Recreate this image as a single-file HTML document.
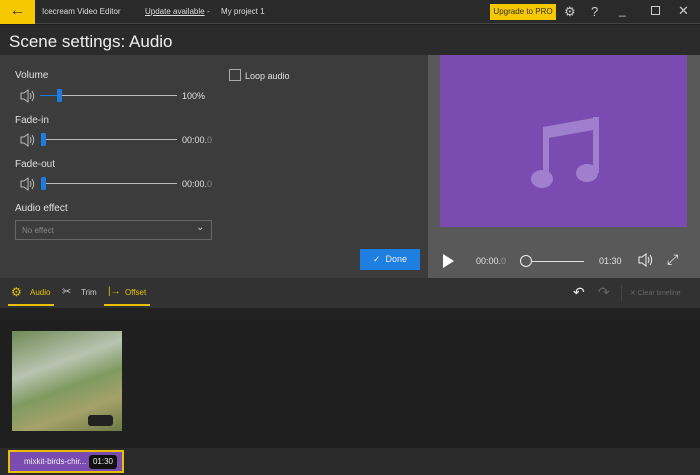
<!DOCTYPE html><html><head><style>
*{margin:0;padding:0;box-sizing:border-box}
body{width:700px;height:475px;overflow:hidden;background:#1f1f1f;font-family:"Liberation Sans",sans-serif;color:#ddd;position:relative}
.a{position:absolute}
.t{font-size:10px;color:#e0e0e0}
.sl{height:1px;background:#bbb}
.kn{width:5px;height:13px;background:#1e7be0;border-radius:1px}
</style></head><body>
<div class="a" style="left:0;top:0;width:700px;height:24px;background:#2a2a2a;border-bottom:1px solid #444"></div>
<div class="a" style="left:0;top:0;width:35px;height:24px;background:#f5c800;color:#333;font-size:16px;text-align:center;line-height:22px">&#8592;</div>
<div class="a" style="left:42px;top:7px;font-size:8px;color:#ddd">Icecream Video Editor</div>
<div class="a" style="left:145px;top:7px;font-size:8px;color:#ddd;text-decoration:underline">Update available</div>
<div class="a" style="left:207px;top:7px;font-size:8px;color:#ddd">-</div>
<div class="a" style="left:221px;top:7px;font-size:8px;color:#ddd">My project 1</div>
<div class="a" style="left:490px;top:4px;width:66px;height:16px;background:#f5c800;color:#333;font-size:8px;text-align:center;line-height:16px">Upgrade to PRO</div>
<div class="a" style="left:564px;top:4px;font-size:13px;color:#ccc">&#9881;</div>
<div class="a" style="left:591px;top:4px;font-size:13px;color:#ccc">?</div>
<div class="a" style="left:619px;top:3px;font-size:12px;color:#ccc">_</div>
<div class="a" style="left:651px;top:6px;width:9px;height:9px;border:1px solid #ccc"></div>
<div class="a" style="left:678px;top:3px;font-size:13px;color:#ccc">&#10005;</div>
<div class="a" style="left:0;top:25px;width:700px;height:30px;background:#2b2b2b"></div>
<div class="a" style="left:9px;top:32px;font-size:17px;color:#eee">Scene settings: Audio</div>
<div class="a" style="left:0;top:55px;width:428px;height:223px;background:#3c3c3c"></div>
<div class="a" style="left:428px;top:55px;width:272px;height:223px;background:#595959"></div>
<div class="a" style="left:440px;top:55px;width:247px;height:172px;background:#7a4cb2"></div>
<svg class="a" style="left:525px;top:115px" width="80" height="80" viewBox="0 0 80 80"><path d="M18 12 L74 2 L74 14 L18 24Z" fill="#a07fcf"/><rect x="18" y="12" width="6" height="58" fill="#a07fcf"/><rect x="68" y="2" width="6" height="56" fill="#a07fcf"/><ellipse cx="17" cy="64" rx="11" ry="9" fill="#a07fcf"/><ellipse cx="62" cy="58" rx="11" ry="9" fill="#a07fcf"/></svg>
<svg width="0" height="0" style="position:absolute"><defs><g id="spk"><path d="M1 5h3l4-3v12l-4-3H1z" fill="none" stroke="#bbb" stroke-width="1"/><path d="M10 5q2 3 0 6M12 3q3.5 5 0 10" fill="none" stroke="#bbb" stroke-width="1"/></g></defs></svg>
<div class="a t" style="left:15px;top:70px">Volume</div>
<div class="a" style="left:229px;top:69px;width:12px;height:12px;border:1px solid #aaa"></div>
<div class="a t" style="left:245px;top:71px;font-size:9px">Loop audio</div>
<svg class="a" style="left:20px;top:88px" width="16" height="16"><use href="#spk"/></svg>
<div class="a sl" style="left:40px;top:95px;width:137px"></div><div class="a" style="left:40px;top:95px;width:18px;height:1px;background:#1e7be0"></div><div class="a kn" style="left:57px;top:89px"></div>
<div class="a t" style="left:182px;top:91px;font-size:9px">100%</div>
<div class="a t" style="left:15px;top:115px">Fade-in</div>
<svg class="a" style="left:20px;top:132px" width="16" height="16"><use href="#spk"/></svg>
<div class="a sl" style="left:42px;top:139px;width:135px"></div><div class="a kn" style="left:41px;top:133px"></div>
<div class="a t" style="left:182px;top:135px;font-size:9px">00:00.<span style="color:#888">0</span></div>
<div class="a t" style="left:15px;top:159px">Fade-out</div>
<svg class="a" style="left:20px;top:176px" width="16" height="16"><use href="#spk"/></svg>
<div class="a sl" style="left:42px;top:183px;width:135px"></div><div class="a kn" style="left:41px;top:177px"></div>
<div class="a t" style="left:182px;top:179px;font-size:9px">00:00.<span style="color:#888">0</span></div>
<div class="a t" style="left:15px;top:203px">Audio effect</div>
<div class="a" style="left:15px;top:220px;width:197px;height:20px;border:1px solid #666"></div>
<div class="a" style="left:22px;top:226px;font-size:8px;color:#888">No effect</div>
<div class="a" style="left:196px;top:222px;font-size:10px;color:#ccc">&#8964;</div>
<div class="a" style="left:360px;top:249px;width:60px;height:21px;background:#1f7fe0;color:#eee;font-size:9px;line-height:21px;text-align:center">&#10003;&nbsp; Done</div>
<div class="a" style="left:443px;top:254px;width:0;height:0;border-left:11px solid #fff;border-top:7px solid transparent;border-bottom:7px solid transparent"></div>
<div class="a t" style="left:476px;top:256px;font-size:9px">00:00.<span style="color:#999">0</span></div>
<div class="a" style="left:520px;top:255px;width:12px;height:12px;border:1px solid #eee;border-radius:50%"></div>
<div class="a sl" style="left:532px;top:261px;width:52px;background:#ddd"></div>
<div class="a t" style="left:599px;top:256px;font-size:9px">01:30</div>
<svg class="a" style="left:638px;top:252px" width="16" height="16"><path d="M1 5h3l4-3v12l-4-3H1z" fill="none" stroke="#eee"/><path d="M10 5q2 3 0 6M12 3q3.5 5 0 10" fill="none" stroke="#eee"/></svg>
<div class="a" style="left:667px;top:251px;font-size:14px;color:#eee">&#10530;</div>
<div class="a" style="left:0;top:278px;width:700px;height:30px;background:#323232"></div>
<div class="a" style="left:11px;top:285px;font-size:12px;color:#e8c000">&#9881;</div>
<div class="a" style="left:30px;top:288px;font-size:8px;color:#e8c000">Audio</div>
<div class="a" style="left:8px;top:304px;width:46px;height:2px;background:#e8c000"></div>
<div class="a" style="left:62px;top:285px;font-size:11px;color:#ccc">&#9986;</div>
<div class="a" style="left:81px;top:288px;font-size:8px;color:#ccc">Trim</div>
<div class="a" style="left:108px;top:286px;font-size:10px;color:#e8c000">|&#8594;</div>
<div class="a" style="left:125px;top:288px;font-size:8px;color:#e8c000">Offset</div>
<div class="a" style="left:104px;top:304px;width:46px;height:2px;background:#e8c000"></div>
<div class="a" style="left:573px;top:284px;font-size:14px;color:#eee">&#8630;</div>
<div class="a" style="left:598px;top:284px;font-size:14px;color:#666">&#8631;</div>
<div class="a" style="left:621px;top:285px;width:1px;height:16px;background:#444"></div>
<div class="a" style="left:630px;top:289px;font-size:7px;color:#666">&#10005; Clear timeline</div>
<div class="a" style="left:0;top:308px;width:700px;height:12px;background:#222"></div>
<div class="a" style="left:12px;top:331px;width:110px;height:100px;background:linear-gradient(160deg,#6f8a55 0%,#b8c4b0 35%,#7f9a60 55%,#a4a26a 75%,#6b7a42 100%)"></div>
<div class="a" style="left:88px;top:415px;width:25px;height:11px;background:#222;border-radius:3px"></div>
<div class="a" style="left:0;top:448px;width:700px;height:27px;background:#2a2a2a"></div>
<div class="a" style="left:8px;top:450px;width:116px;height:23px;border:2px solid #e8c000;background:#7a4cb2"></div>
<div class="a" style="left:24px;top:457px;font-size:8px;color:#eee">mixkit-birds-chir...</div>
<div class="a" style="left:89px;top:455px;width:28px;height:14px;background:#111;border-radius:3px;font-size:8px;color:#eee;text-align:center;line-height:14px">01:30</div>
</body></html>
